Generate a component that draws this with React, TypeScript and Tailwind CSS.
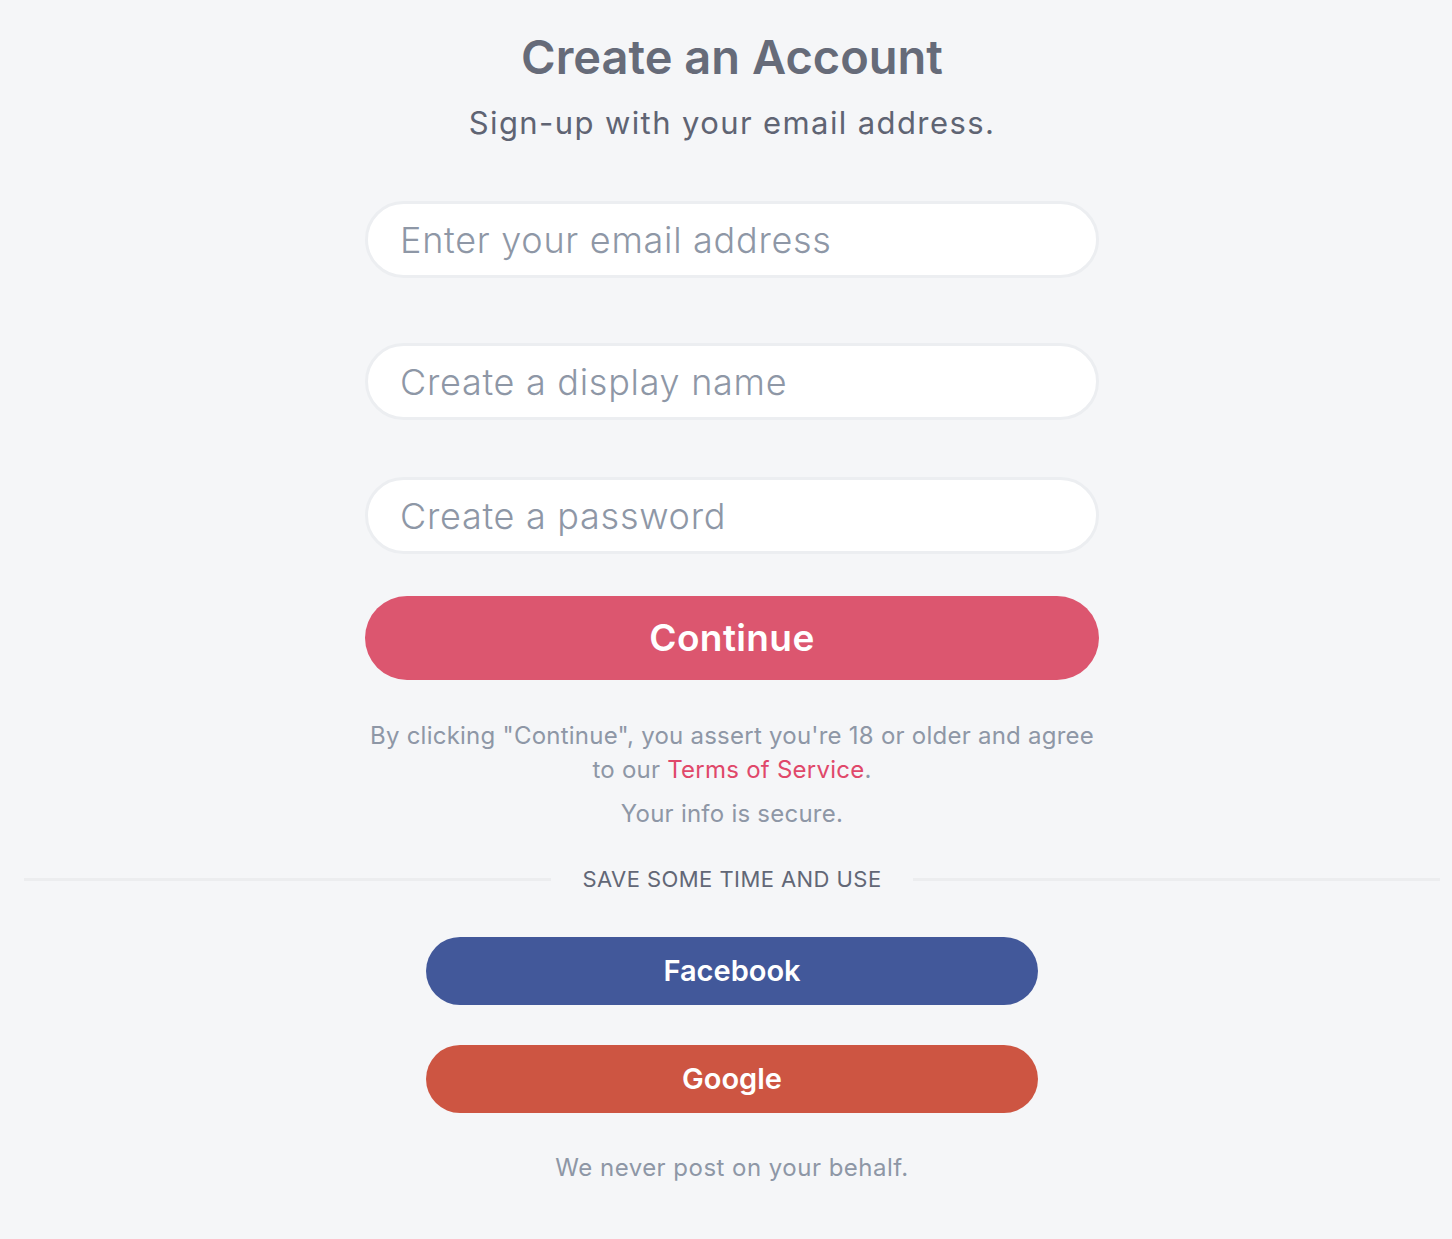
import React from 'react';

const font = { fontFamily: 'Inter, "Noto Sans", sans-serif' };

function Field({ placeholder, type = 'text', className = '' }: { placeholder: string; type?: string; className?: string }) {
  return (
    <input
      type={type}
      placeholder={placeholder}
      className={`block w-full h-[77px] rounded-full border-[3px] border-[#eceef1] bg-white px-[32px] text-[36px] tracking-[0.02em] font-light text-[#5d6270] placeholder:text-[#8e97a6] outline-none ${className}`}
    />
  );
}

export default function App() {
  return (
    <div className="min-h-[1239px] w-full bg-[#f5f6f8] pl-[24px] pr-[12px] pt-[27px]" style={font}>
      {/* Heading */}
      <div className="text-center">
        <h1 className="text-[47px] leading-[60px] font-semibold text-[#666b79]">Create an Account</h1>
        <p className="mt-[16px] text-[31px] leading-[40px] tracking-[0.045em] text-[#5f6473]">Sign-up with your email address.</p>
      </div>

      {/* Form */}
      <form className="mx-auto mt-[58px] w-[734px]" onSubmit={(e) => e.preventDefault()}>
        <Field placeholder="Enter your email address" type="email" />
        <Field placeholder="Create a display name" className="mt-[65px]" />
        <Field placeholder="Create a password" type="password" className="mt-[57px]" />

        <button
          type="submit"
          className="mt-[42px] block h-[84px] w-full rounded-full bg-[#dc566f] text-[37px] tracking-[0.01em] font-semibold text-white"
        >
          Continue
        </button>

        <p className="mt-[39px] text-center text-[24px] leading-[34px] tracking-[0.01em] text-[#8e97a6]">
          By clicking "Continue", you assert you're 18 or older and agree to our{' '}
          <a href="#" className="text-[#e0486a]">Terms of Service</a>.
        </p>
        <p className="mt-[10px] text-center text-[24px] leading-[34px] tracking-[0.01em] text-[#8e97a6]">Your info is secure.</p>
      </form>

      {/* Divider */}
      <div className="mt-[32px] flex items-center">
        <div className="h-[3px] flex-1 bg-[#ecedef]" />
        <span className="px-[31px] text-[22px] leading-[32px] tracking-[0.02em] text-[#626776] uppercase">Save some time and use</span>
        <div className="h-[3px] flex-1 bg-[#ecedef]" />
      </div>

      {/* Social */}
      <div className="mx-auto mt-[42px] w-[612px]">
        <button className="block h-[68px] w-full rounded-full bg-[#42589a] text-[29px] font-semibold text-white">
          Facebook
        </button>
        <button className="mt-[40px] block h-[68px] w-full rounded-full bg-[#cd5542] text-[29px] font-semibold text-white">
          Google
        </button>
      </div>

      <p className="mt-[38px] text-center text-[24px] leading-[34px] tracking-[0.02em] text-[#8e97a6]">We never post on your behalf.</p>
    </div>
  );
}
